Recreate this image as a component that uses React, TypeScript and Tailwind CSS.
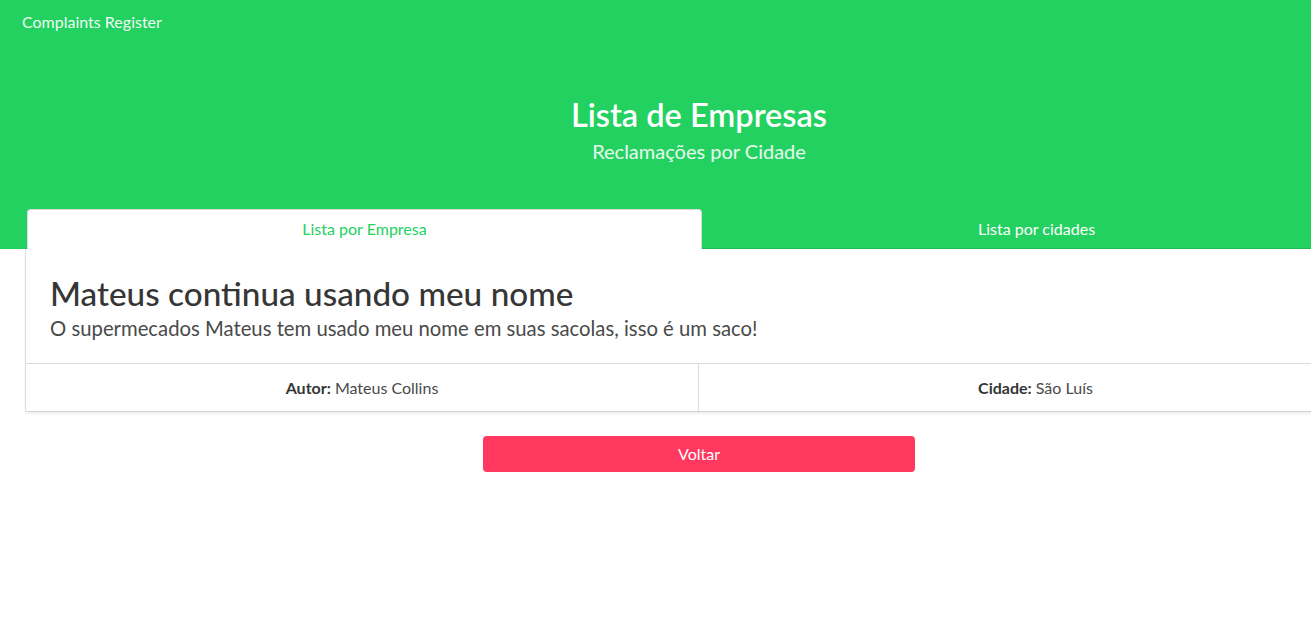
export default function App() {
  return (
    <div className="min-w-[1398px] bg-white font-['Lato','Noto_Sans',sans-serif] text-[#4a4a4a]">
      {/* Hero */}
      <section className="bg-[#23d160] text-white">
        <nav className="h-[52px] flex items-start pt-[10px] px-[22px]">
          <span className="text-[16px] text-white/95">Complaints Register</span>
        </nav>
        <div className="pt-[45px] pb-[45px] text-center">
          <h1 className="text-[32.5px] font-semibold leading-[1.125]">Lista de Empresas</h1>
          <h2 className="text-[20px] leading-[1.25] mt-[5px] text-white/90">Reclamações por Cidade</h2>
        </div>
        <div className="w-[1344px] mx-auto flex">
          <div className="w-[675px] h-10 bg-white rounded-t-[4px] border border-b-0 border-[#dbdbdb] flex items-center justify-center text-[16px] text-[#23d160]">
            Lista por Empresa
          </div>
          <div className="flex-1 h-10 flex items-center justify-center text-[16px] text-white">
            Lista por cidades
          </div>
        </div>
      </section>

      {/* Card */}
      <div className="w-[1346px] mx-auto bg-white shadow-[0_2px_3px_rgba(10,10,10,0.1),0_0_0_1px_rgba(10,10,10,0.1)]">
        <div className="px-6 pt-[26px] pb-[22px]">
          <h3 className="text-[33.3px] font-medium leading-[1.125] text-[#363636]">Mateus continua usando meu nome</h3>
          <p className="text-[20.3px] leading-[1.25] mt-[4px] text-[#4a4a4a]">
            O supermecados Mateus tem usado meu nome em suas sacolas, isso é um saco!
          </p>
        </div>
        <div className="flex border-t border-[#dbdbdb] h-12 text-[16px]">
          <div className="w-[673px] flex items-center justify-center border-r border-[#dbdbdb]">
            <span>
              <strong className="font-bold text-[#363636]">Autor:</strong> Mateus Collins
            </span>
          </div>
          <div className="flex-1 flex items-center justify-center">
            <span>
              <strong className="font-bold text-[#363636]">Cidade:</strong> São Luís
            </span>
          </div>
        </div>
      </div>

      <div className="flex justify-center pt-[25px]">
        <button className="w-[432px] h-9 rounded-[4px] bg-[#ff3860] text-white text-[16px]">Voltar</button>
      </div>
      <div className="h-[160px]" />
    </div>
  );
}
